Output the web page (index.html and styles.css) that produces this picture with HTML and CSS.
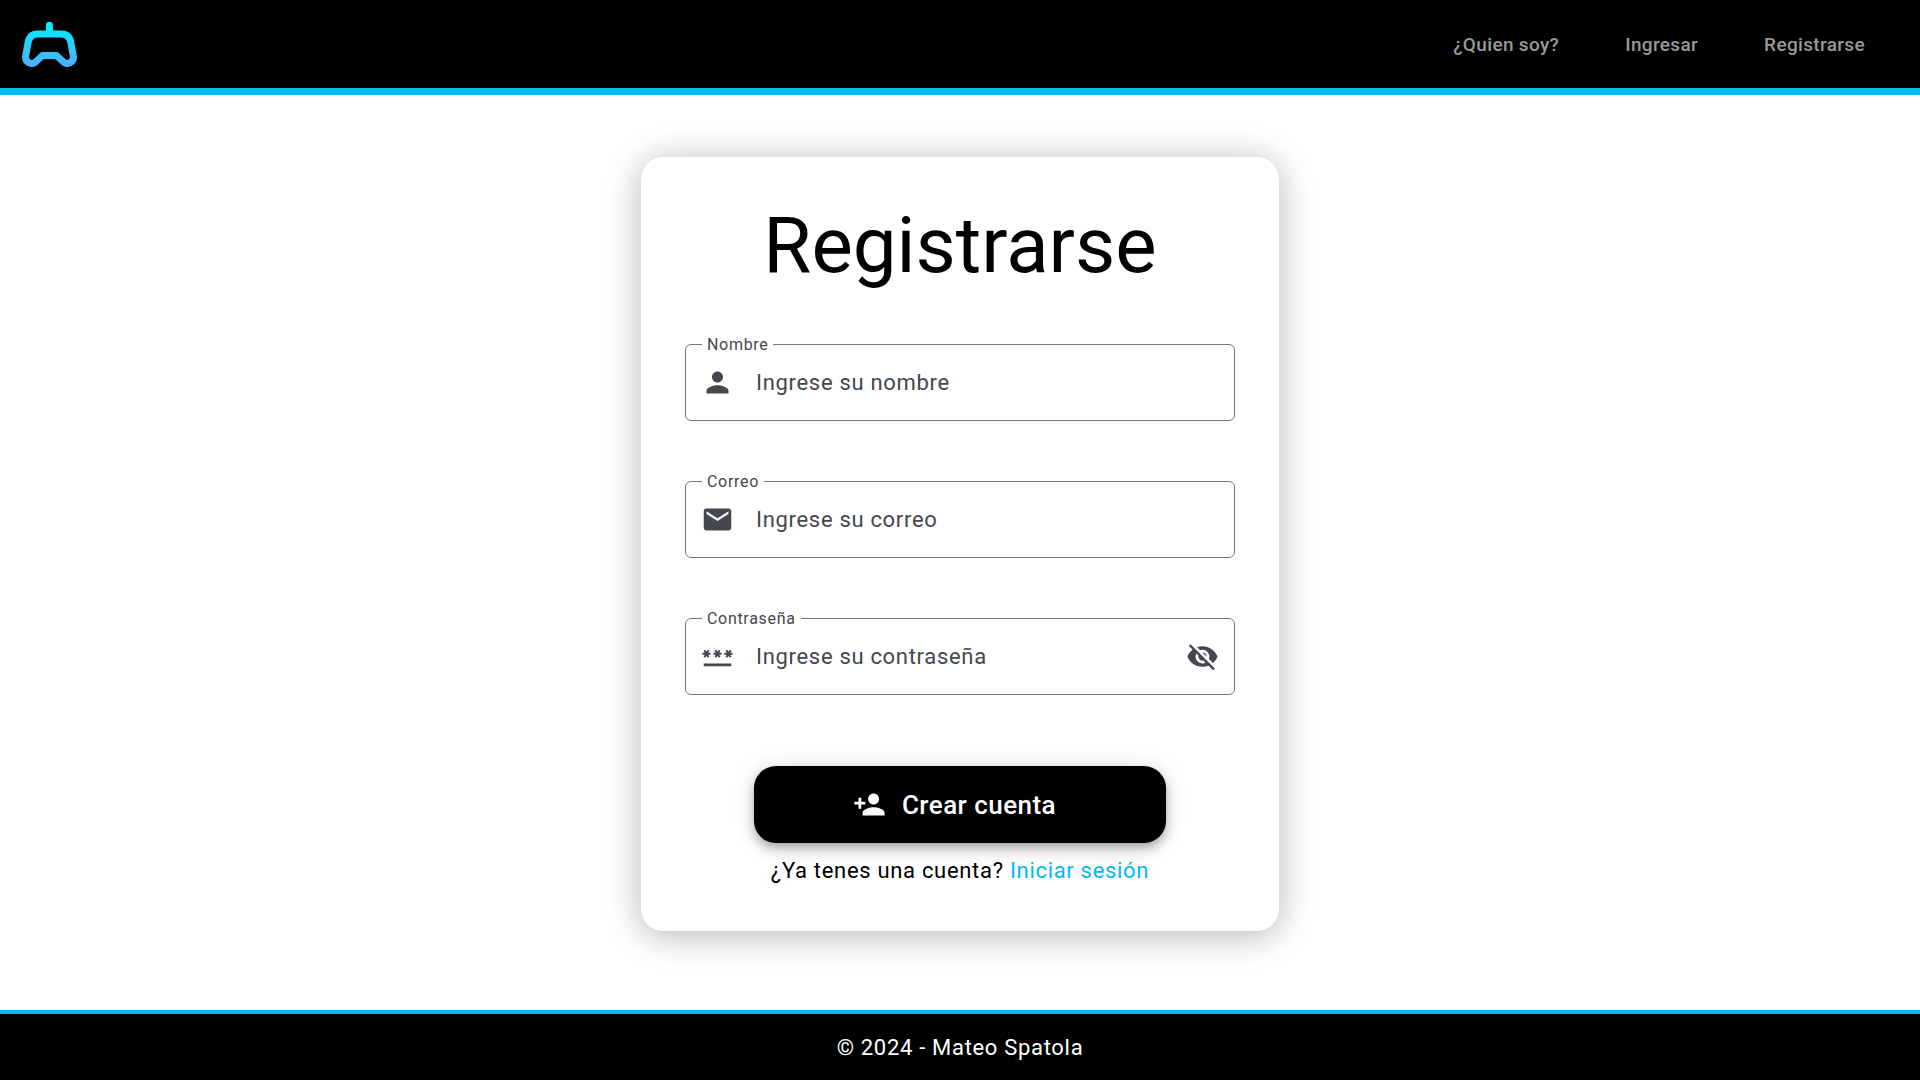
FILE: index.html
```html
<!DOCTYPE html>
<html lang="es">
<head>
  <meta charset="utf-8">
  <meta name="viewport" content="width=device-width, initial-scale=1">
  <title>Registrarse</title>
  <link rel="stylesheet" href="styles.css">
</head>
<body>
  <header class="header">
    <a class="logo" href="#" aria-label="Inicio">
      <svg viewBox="22 21 55 46" width="55" height="46" fill="none" stroke="url(#logo-gradient)" stroke-width="7" stroke-linecap="round" stroke-linejoin="round" aria-hidden="true">
        <defs>
          <linearGradient id="logo-gradient" gradientUnits="userSpaceOnUse" x1="0" y1="21" x2="0" y2="67">
            <stop offset="0" stop-color="#00f2fe"/>
            <stop offset="1" stop-color="#4facfe"/>
          </linearGradient>
        </defs>
        <path d="M37.5 34H61.5Q69.5 34 71 43L73.4 56.5C74 62 67.5 65.5 63.5 62L56.5 55.5H42.5L35.5 62C31.5 65.5 25 62 25.6 56.5L28 43Q29.500 34 37.500 34ZM49.500 34L49.400 25.300"/>
      </svg>
    </a>
    <nav class="nav">
      <a class="nav-link" href="#">¿Quien soy?</a>
      <a class="nav-link" href="#">Ingresar</a>
      <a class="nav-link" href="#">Registrarse</a>
    </nav>
  </header>

  <main class="main">
    <form class="card">
      <h1 class="title">Registrarse</h1>

      <div class="fields">
        <div class="field">
          <label class="field-label" for="nombre">Nombre</label>
          <svg class="icon" viewBox="0 0 24 24" aria-hidden="true"><path d="M12 12c2.210 0 4-1.790 4-4s-1.790-4-4-4-4 1.790-4 4 1.790 4 4 4zm0 2c-2.670 0-8 1.340-8 4v2h16v-2c0-2.660-5.330-4-8-4z"/></svg>
          <input class="field-input" id="nombre" type="text" placeholder="Ingrese su nombre">
        </div>
        <div class="field">
          <label class="field-label" for="correo">Correo</label>
          <svg class="icon" viewBox="0 0 24 24" aria-hidden="true"><path d="M20 4H4c-1.100 0-1.990.9-1.990 2L2 18c0 1.100.9 2 2 2h16c1.100 0 2-.9 2-2V6c0-1.100-.9-2-2-2zm0 4l-8 5-8-5V6l8 5 8-5v2z"/></svg>
          <input class="field-input" id="correo" type="email" placeholder="Ingrese su correo">
        </div>
        <div class="field">
          <label class="field-label" for="contrasena">Contraseña</label>
          <svg class="icon" viewBox="0 0 24 24" aria-hidden="true"><path d="M2 17h20v2H2v-2zm1.150-4.050L4 11.470l.85 1.480 1.300-.75-.85-1.480H7v-1.500H5.300l.85-1.470L4.850 7 4 8.470 3.150 7l-1.300.75.85 1.470H1v1.500h1.700l-.85 1.480 1.300.75zm6.700-.75l1.300.75.85-1.480.85 1.480 1.300-.75-.85-1.480H15v-1.500h-1.700l.85-1.470-1.300-.75L12 8.470 11.150 7l-1.300.75.85 1.470H9v1.500h1.700l-.85 1.480zM23 9.220h-1.700l.85-1.470-1.300-.75L20 8.470 19.150 7l-1.300.75.85 1.470H17v1.500h1.700l-.85 1.480 1.300.75.85-1.480.85 1.480 1.300-.75-.85-1.480H23v-1.500z"/></svg>
          <input class="field-input" id="contrasena" type="password" placeholder="Ingrese su contraseña">
          <button class="toggle" type="button" aria-label="Mostrar contraseña">
            <svg class="icon" viewBox="0 0 24 24" aria-hidden="true"><path d="M12 7c2.760 0 5 2.240 5 5 0 .65-.13 1.260-.36 1.830l2.920 2.920c1.510-1.260 2.700-2.890 3.430-4.750-1.730-4.390-6-7.500-11-7.500-1.400 0-2.740.25-3.980.7l2.160 2.160C10.740 7.130 11.350 7 12 7zM2 4.270l2.280 2.280.46.46C3.080 8.300 1.780 10.020 1 12c1.730 4.390 6 7.500 11 7.500 1.550 0 3.030-.3 4.380-.84l.42.42L19.730 22 21 20.730 3.270 3 2 4.270zM7.530 9.800l1.550 1.550c-.05.21-.08.43-.08.65 0 1.660 1.340 3 3 3 .22 0 .44-.03.65-.08l1.550 1.550c-.67.33-1.410.53-2.200.53-2.760 0-5-2.240-5-5 0-.79.2-1.530.53-2.200zm4.310-.78l3.150 3.150.02-.16c0-1.660-1.340-3-3-3l-.17.01z"/></svg>
          </button>
        </div>
      </div>

      <button class="submit" type="submit">
        <svg class="icon" viewBox="0 0 24 24" aria-hidden="true"><path d="M15 12c2.210 0 4-1.790 4-4s-1.790-4-4-4-4 1.790-4 4 1.790 4 4 4zm-9-2V7H4v3H1v2h3v3h2v-3h3v-2H6zm9 4c-2.670 0-8 1.340-8 4v2h16v-2c0-2.660-5.330-4-8-4z"/></svg>
        Crear cuenta
      </button>
      <p class="login">¿Ya tenes una cuenta? <a class="login-link" href="#">Iniciar sesión</a></p>
    </form>
  </main>

  <footer class="footer">© 2024 - Mateo Spatola</footer>
</body>
</html>
```

FILE: styles.css
```css
:root {
  --accent: #00b9f5;
  --ink: #44474e;
  --outline: #74777f;
}

* {
  box-sizing: border-box;
}

body {
  margin: 0;
  min-height: 100vh;
  display: flex;
  flex-direction: column;
  background: #fff;
  color: #000;
  font-family: Roboto, "Liberation Sans", sans-serif;
  font-size: 22px;
  line-height: 33px;
  letter-spacing: 0.03125em;
}

.header {
  display: flex;
  align-items: center;
  justify-content: space-between;
  padding: 21px 55px 21px 22px;
  background: #000;
  border-bottom: 7px solid var(--accent);
}

.logo {
  display: flex;
}

.nav {
  display: flex;
  gap: 66px;
}

.nav-link {
  color: #999;
  font-size: 19px;
  font-weight: 500;
  line-height: 31px;
  letter-spacing: 0.0179em;
  text-decoration: none;
}

.main {
  flex: 1;
  padding: 62px 22px 79px;
}

.card {
  max-width: 638px;
  margin: 0 auto;
  padding: 44px;
  border-radius: 22px;
  background: #fff;
  box-shadow: 0 4px 35px rgba(0, 0, 0, 0.3);
}

.title {
  margin: 0 0 53px;
  font-size: 78px;
  font-weight: 400;
  line-height: 90px;
  letter-spacing: normal;
  text-align: center;
}

.fields {
  display: grid;
  gap: 60px;
}

.field {
  position: relative;
  display: flex;
  align-items: center;
  height: 77px;
  padding: 0 15px;
  border: 1px solid var(--outline);
  border-radius: 6px;
  color: var(--ink);
}

.field-label {
  position: absolute;
  top: -11px;
  left: 16px;
  padding: 0 5px;
  background: #fff;
  font-size: 16px;
  line-height: 22px;
}

.icon {
  flex: none;
  width: 33px;
  height: 33px;
  fill: currentColor;
}

.field-input {
  flex: 1;
  min-width: 0;
  height: 100%;
  margin-left: 22px;
  padding: 0;
  border: 0;
  outline: 0;
  background: none;
  color: inherit;
  font: inherit;
  letter-spacing: inherit;
}

.field-input::placeholder {
  color: inherit;
  opacity: 1;
}

.toggle {
  display: flex;
  padding: 0;
  border: 0;
  background: none;
  color: inherit;
  cursor: pointer;
}

.submit {
  display: flex;
  align-items: center;
  justify-content: center;
  gap: 16px;
  width: 75%;
  height: 77px;
  margin: 71px auto 11px;
  padding: 0 22px 0 11px;
  border: 0;
  border-radius: 22px;
  background: #000;
  color: #fff;
  font-family: inherit;
  font-size: 26px;
  font-weight: 500;
  letter-spacing: 0.0179em;
  box-shadow:
    0 4px 7px -1px rgba(0, 0, 0, 0.2),
    0 8px 14px rgba(0, 0, 0, 0.14),
    0 1px 25px rgba(0, 0, 0, 0.12);
  cursor: pointer;
}

.login {
  margin: 0;
  text-align: center;
}

.login-link {
  color: var(--accent);
  text-decoration: none;
}

.footer {
  padding: 17px 22px 16px;
  border-top: 4px solid var(--accent);
  background: #000;
  color: #fff;
  text-align: center;
}
```
